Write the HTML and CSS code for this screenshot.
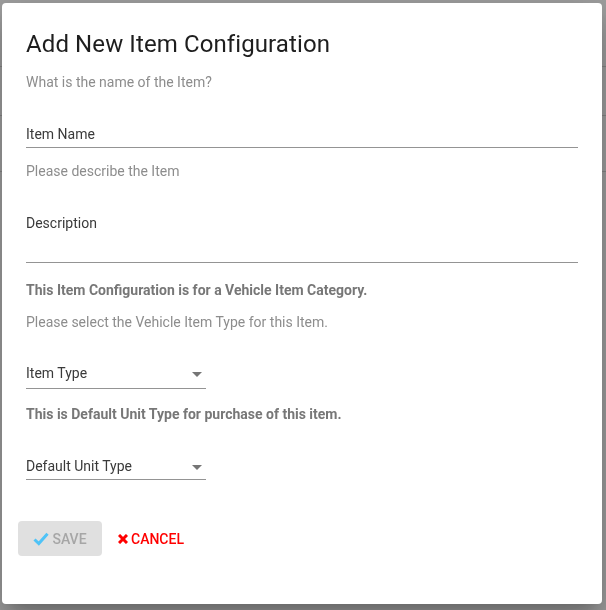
FILE: index.html
```html
<!DOCTYPE html>
<html lang="en">
<head>
<meta charset="utf-8">
<title>Add New Item Configuration</title>
<link rel="stylesheet" href="styles.css">
</head>
<body>
<div class="behind">
  <div class="behind-row r1"></div>
  <div class="behind-row r2"></div>
  <div class="behind-row r3"></div>
</div>
<div class="backdrop"></div>
<div class="dialog" role="dialog" aria-labelledby="dlg-title">
  <h2 class="title" id="dlg-title">Add New Item Configuration</h2>
  <div class="content">
    <p class="hint h1">What is the name of the Item?</p>
    <div class="field full f-name"><span class="label">Item Name</span></div>
    <p class="hint h2">Please describe the Item</p>
    <div class="field full f-desc"><span class="label">Description</span></div>
    <p class="strong s1">This Item Configuration is for a Vehicle Item Category.</p>
    <p class="hint h3">Please select the Vehicle Item Type for this Item.</p>
    <div class="field select f-type">
      <span class="label">Item Type</span>
      <svg class="arrow" width="10" height="5" viewBox="0 0 10 5"><path d="M0 0h10L5 5z" fill="#757575"/></svg>
    </div>
    <p class="strong s2">This is Default Unit Type for purchase of this item.</p>
    <div class="field select f-unit">
      <span class="label">Default Unit Type</span>
      <svg class="arrow" width="10" height="5" viewBox="0 0 10 5"><path d="M0 0h10L5 5z" fill="#757575"/></svg>
    </div>
  </div>
  <div class="actions">
    <button class="btn save" disabled>
      <svg class="ico" width="16" height="14" viewBox="0 0 16 14"><path d="M1.5 7.5 5.8 11.6 14.5 1.8" fill="none" stroke="#4fc3f7" stroke-width="3"/></svg>
      SAVE
    </button>
    <button class="btn cancel">
      <svg class="ico" width="10" height="10" viewBox="0 0 10 10"><path d="M1 1 9 9M9 1 1 9" stroke="#ff0000" stroke-width="3"/></svg>
      CANCEL
    </button>
  </div>
</div>
</body>
</html>
```

FILE: styles.css
```css
html, body {
  margin: 0;
  padding: 0;
  height: 100%;
}
body {
  background: #ffffff;
  font-family: Roboto, "Liberation Sans", Arial, sans-serif;
  overflow: hidden;
}
.behind {
  display: flex;
  flex-direction: column;
}
.behind-row {
  border-bottom: 1px solid #d8d8d8;
}
.r1 { height: 66px; }
.r2 { height: 48px; }
.r3 { height: 55px; }
.backdrop {
  position: fixed;
  inset: 0;
  background: rgba(0, 0, 0, 0.38);
}
.dialog {
  position: fixed;
  left: 2px;
  top: 3px;
  width: 600px;
  height: 601px;
  box-sizing: border-box;
  background: #fff;
  border-radius: 4px;
  box-shadow: 0 11px 15px -7px rgba(0,0,0,0.2), 0 24px 38px 3px rgba(0,0,0,0.14), 0 9px 46px 8px rgba(0,0,0,0.12);
  display: flex;
  flex-direction: column;
}
.title {
  margin: 0;
  padding: 25px 24px 0;
  font-size: 24px;
  line-height: 32px;
  font-weight: 400;
  color: #1e1e1e;
  letter-spacing: 0.1px;
}
.content {
  padding: 0 24px;
  display: flex;
  flex-direction: column;
  align-items: flex-start;
}
.hint, .strong {
  margin: 0;
  font-size: 14px;
  line-height: 20px;
}
.hint {
  color: #8d8d8d;
}
.strong {
  color: #777;
  font-weight: 700;
}
.h1 { margin-top: 12px; }
.h2 { margin-top: 13px; }
.s1 { margin-top: 17px; }
.h3 { margin-top: 12px; }
.s2 { margin-top: 15px; }
.field {
  box-sizing: border-box;
  border-bottom: 1px solid #949494;
  display: flex;
  align-items: flex-start;
  justify-content: space-between;
}
.label {
  font-size: 14px;
  line-height: 20px;
  color: #3a3a3a;
}
.full { align-self: stretch; }
.select { width: 180px; }
.f-name { padding: 32px 0 3px; }
.f-desc { padding: 32px 0 29px; }
.f-type { margin-top: 31px; padding-bottom: 5px; }
.f-unit { margin-top: 32px; padding-bottom: 3px; }
.arrow {
  margin: 9px 4px 0 0;
  flex: none;
}
.actions {
  margin-top: auto;
  padding: 0 16px 48px;
  display: flex;
  align-items: center;
  gap: 8px;
}
.btn {
  font-family: inherit;
  font-size: 14px;
  font-weight: 500;
  line-height: 20px;
  border: 0;
  border-radius: 4px;
  min-width: 64px;
  display: inline-flex;
  align-items: center;
  gap: 3px;
  background: transparent;
}
.save {
  background: #e0e0e0;
  color: #a6a6a6;
  width: 84px;
  height: 35px;
  justify-content: center;
  padding: 0;
}
.cancel {
  color: #ff0000;
  padding: 0 8px;
}
.ico { flex: none; }
```
